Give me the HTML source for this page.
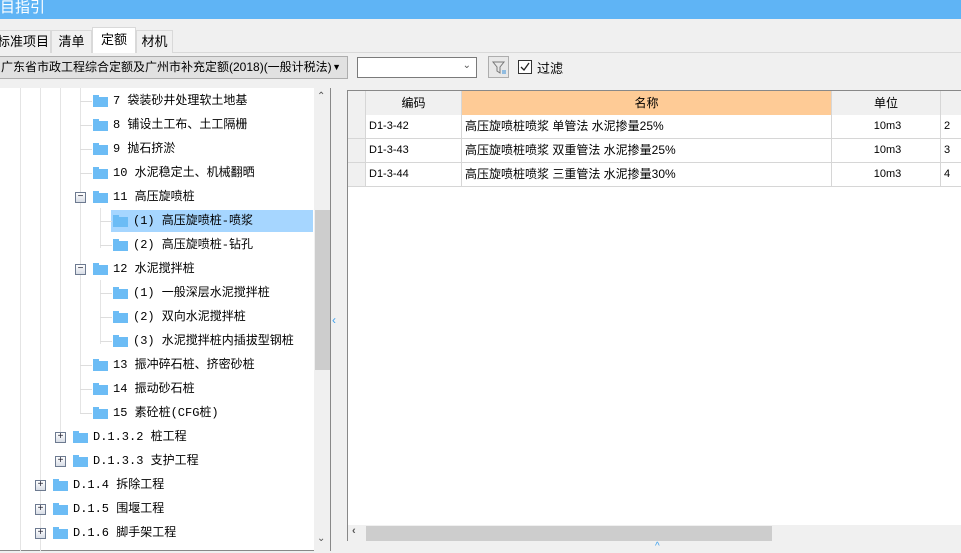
<!DOCTYPE html>
<html><head><meta charset="utf-8"><style>
*{margin:0;padding:0;box-sizing:border-box}
body{width:961px;height:553px;overflow:hidden;background:#f0f0f0;font-family:"Liberation Sans","Noto Sans CJK SC",sans-serif;font-size:12px;color:#000;position:relative}
.a{position:absolute}
.title{left:0;top:0;width:961px;height:19px;background:#5fb4f5;color:#fff;font-size:15px;line-height:15px;overflow:hidden}
.tab{top:30px;height:23px;border:1px solid #d9d9d9;border-bottom:none;background:#f0f0f0;text-align:center;line-height:22px;font-size:13px;white-space:nowrap}
.tree{left:0;top:88px;width:331px;height:463px;background:#fff;border-right:1px solid #888;border-bottom:1px solid #888}
.it{position:absolute;height:20px;line-height:20px;white-space:nowrap;font-family:"Liberation Mono","Noto Sans CJK SC",monospace;font-size:12px}
.fd{position:absolute;width:15px;height:12px}
.fd:before{content:"";position:absolute;left:0;top:0;width:6px;height:3px;background:#6cbcf5}
.fd:after{content:"";position:absolute;left:0;top:2px;width:15px;height:10px;background:#6cbcf5}
.ex{position:absolute;width:11px;height:11px;border:1px solid #6d7a90;background:linear-gradient(#fff,#d8dde6);font-size:10px;line-height:8px;text-align:center;color:#223}
.vl{position:absolute;width:1px;background:#e4e4e4}
.hl{position:absolute;height:1px;background:#ddd}
.grid{left:347px;top:90px;width:614px;height:451px;background:#fff;border-left:1px solid #888;border-top:1px solid #888;border-bottom:1px solid #888}
.hd{position:absolute;top:0;height:24px;background:#f0f0f0;border-right:1px solid #d6d6d6;text-align:center;line-height:24px;font-size:12px}
.c{position:absolute;height:24px;line-height:23px;border-right:1px solid #d6d6d6;border-bottom:1px solid #d6d6d6;padding-left:3px;font-size:11px;white-space:nowrap}
</style></head><body>
<div class="a title">目指引</div>
<div class="a" style="left:0;top:52px;width:961px;height:1px;background:#d9d9d9"></div>
<div class="a tab" style="left:-5px;width:56px">标准项目</div>
<div class="a tab" style="left:51px;width:41px">清单</div>
<div class="a tab" style="left:92px;top:27px;height:26px;width:44px;background:#fff;line-height:24px">定额</div>
<div class="a tab" style="left:136px;width:37px">材机</div>
<div class="a" style="left:-2px;top:56px;width:350px;height:23px;background:#e1e1e1;border:1px solid #adadad;line-height:21px;font-size:12px;padding-left:2px;white-space:nowrap;overflow:hidden">广东省市政工程综合定额及广州市补充定额(2018)(一般计税法)<span style="position:absolute;right:6px;font-size:9px">▼</span></div>
<div class="a" style="left:357px;top:57px;width:120px;height:21px;background:#fff;border:1px solid #7a7a7a"><span style="position:absolute;right:5px;top:2px;font-size:10px;color:#555">&#8964;</span></div>
<div class="a" style="left:488px;top:56px;width:21px;height:22px;border:1px solid #adadad;background:#e8e8e8"><svg width="19" height="20"><path d="M4 5h11l-4 5v6l-3-2v-4z" fill="none" stroke="#777"/><path d="M13 14h4M13 16h4" stroke="#3a8fd8"/></svg></div>
<div class="a" style="left:518px;top:60px;width:14px;height:14px;border:1px solid #333;background:#fff"><svg width="12" height="12"><path d="M2 6l3 3 5-7" fill="none" stroke="#222" stroke-width="1.3"/></svg></div>
<div class="a" style="left:537px;top:58px;font-size:13px">过滤</div>

<div class="a tree">
<div class="vl" style="left:20px;top:0;height:463px"></div>
<div class="vl" style="left:40px;top:0;height:463px"></div>
<div class="vl" style="left:60px;top:0;height:349px"></div>
<div class="vl" style="left:80px;top:0;height:326px"></div>
<div class="vl" style="left:100px;top:120px;height:40px"></div>
<div class="vl" style="left:100px;top:192px;height:64px"></div>
</div>
<div class="a" style="left:0;top:88px;width:315px;height:463px;overflow:hidden">
<div class="hl" style="left:80px;top:13px;width:12px"></div><div class="fd" style="left:93px;top:7px"></div><div class="it" style="left:113px;top:3px">7 袋装砂井处理软土地基</div>
<div class="hl" style="left:80px;top:37px;width:12px"></div><div class="fd" style="left:93px;top:31px"></div><div class="it" style="left:113px;top:27px">8 铺设土工布、土工隔栅</div>
<div class="hl" style="left:80px;top:61px;width:12px"></div><div class="fd" style="left:93px;top:55px"></div><div class="it" style="left:113px;top:51px">9 抛石挤淤</div>
<div class="hl" style="left:80px;top:85px;width:12px"></div><div class="fd" style="left:93px;top:79px"></div><div class="it" style="left:113px;top:75px">10 水泥稳定土、机械翻晒</div>
<div class="ex" style="left:75px;top:104px">−</div><div class="fd" style="left:93px;top:103px"></div><div class="it" style="left:113px;top:99px">11 高压旋喷桩</div>
<div class="a" style="left:111px;top:122px;width:202px;height:22px;background:#a6d6ff"></div>
<div class="hl" style="left:100px;top:133px;width:12px"></div><div class="fd" style="left:113px;top:127px"></div><div class="it" style="left:133px;top:123px">(1) 高压旋喷桩-喷浆</div>
<div class="hl" style="left:100px;top:157px;width:12px"></div><div class="fd" style="left:113px;top:151px"></div><div class="it" style="left:133px;top:147px">(2) 高压旋喷桩-钻孔</div>
<div class="ex" style="left:75px;top:176px">−</div><div class="fd" style="left:93px;top:175px"></div><div class="it" style="left:113px;top:171px">12 水泥搅拌桩</div>
<div class="hl" style="left:100px;top:205px;width:12px"></div><div class="fd" style="left:113px;top:199px"></div><div class="it" style="left:133px;top:195px">(1) 一般深层水泥搅拌桩</div>
<div class="hl" style="left:100px;top:229px;width:12px"></div><div class="fd" style="left:113px;top:223px"></div><div class="it" style="left:133px;top:219px">(2) 双向水泥搅拌桩</div>
<div class="hl" style="left:100px;top:253px;width:12px"></div><div class="fd" style="left:113px;top:247px"></div><div class="it" style="left:133px;top:243px">(3) 水泥搅拌桩内插拔型钢桩</div>
<div class="hl" style="left:80px;top:277px;width:12px"></div><div class="fd" style="left:93px;top:271px"></div><div class="it" style="left:113px;top:267px">13 振冲碎石桩、挤密砂桩</div>
<div class="hl" style="left:80px;top:301px;width:12px"></div><div class="fd" style="left:93px;top:295px"></div><div class="it" style="left:113px;top:291px">14 振动砂石桩</div>
<div class="hl" style="left:80px;top:325px;width:12px"></div><div class="fd" style="left:93px;top:319px"></div><div class="it" style="left:113px;top:315px">15 素砼桩(CFG桩)</div>
<div class="ex" style="left:55px;top:344px">+</div><div class="fd" style="left:73px;top:343px"></div><div class="it" style="left:93px;top:339px">D.1.3.2 桩工程</div>
<div class="ex" style="left:55px;top:368px">+</div><div class="fd" style="left:73px;top:367px"></div><div class="it" style="left:93px;top:363px">D.1.3.3 支护工程</div>
<div class="ex" style="left:35px;top:392px">+</div><div class="fd" style="left:53px;top:391px"></div><div class="it" style="left:73px;top:387px">D.1.4 拆除工程</div>
<div class="ex" style="left:35px;top:416px">+</div><div class="fd" style="left:53px;top:415px"></div><div class="it" style="left:73px;top:411px">D.1.5 围堰工程</div>
<div class="ex" style="left:35px;top:440px">+</div><div class="fd" style="left:53px;top:439px"></div><div class="it" style="left:73px;top:435px">D.1.6 脚手架工程</div>
</div>
<div class="a" style="left:314px;top:88px;width:16px;height:463px;background:#f0f0f0"></div>
<div class="a" style="left:315px;top:210px;width:15px;height:160px;background:#cdcdcd"></div>
<div class="a" style="left:317px;top:91px;font-size:10px;color:#555">&#8963;</div>
<div class="a" style="left:317px;top:533px;font-size:10px;color:#555">&#8964;</div>
<div class="a" style="left:332px;top:313px;color:#3ca0ee;font-size:12px">‹</div>

<div class="a grid">
<div class="hd" style="left:0;width:18px"></div>
<div class="hd" style="left:18px;width:96px">编码</div>
<div class="hd" style="left:114px;width:370px;background:#fecb96">名称</div>
<div class="hd" style="left:484px;width:109px">单位</div>
<div class="hd" style="left:593px;width:30px"></div>
<div class="c" style="left:0;top:24px;width:18px;background:#f0f0f0"></div>
<div class="c" style="left:18px;top:24px;width:96px">D1-3-42</div>
<div class="c" style="left:114px;top:24px;width:370px;font-size:12px">高压旋喷桩喷浆 单管法 水泥掺量25%</div>
<div class="c" style="left:484px;top:24px;width:109px;text-align:center">10m3</div>
<div class="c" style="left:593px;top:24px;width:30px">2</div>
<div class="c" style="left:0;top:48px;width:18px;background:#f0f0f0"></div>
<div class="c" style="left:18px;top:48px;width:96px">D1-3-43</div>
<div class="c" style="left:114px;top:48px;width:370px;font-size:12px">高压旋喷桩喷浆 双重管法 水泥掺量25%</div>
<div class="c" style="left:484px;top:48px;width:109px;text-align:center">10m3</div>
<div class="c" style="left:593px;top:48px;width:30px">3</div>
<div class="c" style="left:0;top:72px;width:18px;background:#f0f0f0"></div>
<div class="c" style="left:18px;top:72px;width:96px">D1-3-44</div>
<div class="c" style="left:114px;top:72px;width:370px;font-size:12px">高压旋喷桩喷浆 三重管法 水泥掺量30%</div>
<div class="c" style="left:484px;top:72px;width:109px;text-align:center">10m3</div>
<div class="c" style="left:593px;top:72px;width:30px">4</div>
<div class="a" style="left:0;top:434px;width:614px;height:16px;background:#f0f0f0"></div>
<div class="a" style="left:18px;top:435px;width:406px;height:15px;background:#cdcdcd"></div>
<div class="a" style="left:4px;top:434px;font-size:11px;color:#555;font-weight:bold">‹</div>
</div>
<div class="a" style="left:655px;top:541px;color:#3ca0ee;font-size:10px">^</div>
</body></html>
